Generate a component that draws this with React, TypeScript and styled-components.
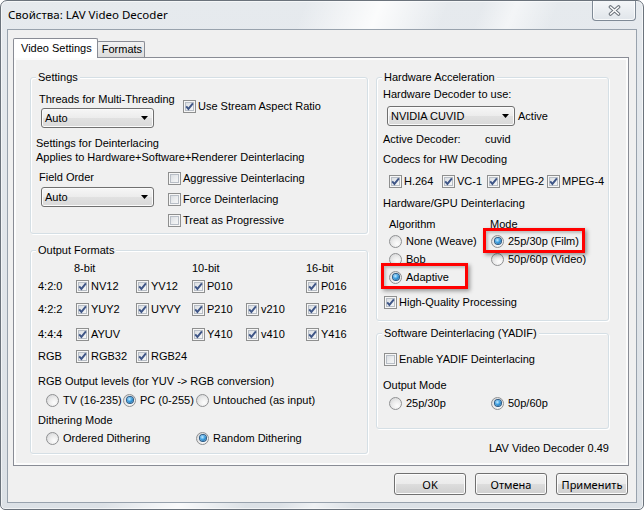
import React from "react";
import styled, { createGlobalStyle } from "styled-components";

const GlobalStyle = createGlobalStyle`
  html, body { margin: 0; padding: 0; }
  body {
    width: 644px; height: 510px; overflow: hidden; background: #ffffff;
    font-family: "Liberation Sans", Arial, sans-serif; font-size: 11px; color: #000;
  }
  *, *::before, *::after { box-sizing: border-box; }
`;

const Window = styled.div`
  width: 644px;
  height: 510px;
  border: 1px solid #6b737c;
  border-radius: 7px 7px 5px 5px;
  padding: 0 6px 6px 6px;
  display: flex;
  flex-direction: column;
  overflow: hidden;
  background:
    linear-gradient(112deg, rgba(255,255,255,0) 36%, rgba(255,255,255,0.85) 45%, rgba(255,255,255,0) 53%),
    linear-gradient(112deg, rgba(255,255,255,0) 57%, rgba(255,255,255,0.55) 61%, rgba(255,255,255,0) 66%),
    linear-gradient(180deg, #e6eaee 0%, #dce1e6 100%);
  box-shadow: inset 0 0 0 1px rgba(255,255,255,0.6);
`;

const TitleBar = styled.div`
  flex: none;
  height: 28px;
  display: flex;
  align-items: flex-start;
`;

const Title = styled.div`
  margin-top: 7px;
  padding-left: 1px;
  line-height: 14px;
  font-family: "Noto Sans", "Liberation Sans", sans-serif;
  font-size: 11.5px;
  color: #000;
  white-space: nowrap;
`;

const CloseButton = styled.div`
  margin-left: auto;
  margin-right: 1px;
  margin-top: -1px;
  width: 44px;
  height: 21px;
  border: 1px solid #7f8a96;
  border-top: none;
  border-radius: 0 0 4px 4px;
  background: linear-gradient(#f5f7f9, #e0e5ea);
  box-shadow: inset 0 0 0 1px rgba(255,255,255,0.75);
  display: flex;
  align-items: center;
  justify-content: center;
`;

const Client = styled.div`
  flex: 1;
  border: 1px solid #98a2ad;
  background: #f0f0f0;
  display: flex;
  flex-direction: column;
  padding: 8px 7px 0 5px;
`;

const TabStrip = styled.div`
  height: 19px;
  display: flex;
  align-items: flex-end;
`;

const Tab = styled.div<{ $active?: boolean }>`
  position: relative;
  z-index: ${(p) => (p.$active ? 1 : 0)};
  height: ${(p) => (p.$active ? 20 : 16)}px;
  margin-bottom: ${(p) => (p.$active ? -1 : 0)}px;
  margin-left: ${(p) => (p.$active ? 0 : -1)}px;
  padding: ${(p) => (p.$active ? "0 5px 0 7px" : "0 2px 0 4px")};
  border: 1px solid #898c95;
  border-bottom: none;
  border-radius: 2px 2px 0 0;
  background: ${(p) => (p.$active ? "#ffffff" : "linear-gradient(#f2f2f2, #dcdcdc)")};
  line-height: ${(p) => (p.$active ? 18 : 15)}px;
  white-space: nowrap;
`;

const TabPanel = styled.div`
  width: 616px;
  height: 409px;
  border: 1px solid #898c95;
  background: #fcfcfc;
  padding: 2px;
  display: flex;
`;

const Page = styled.div`
  flex: 1;
  background: #f0f0f0;
  display: flex;
  gap: 8px;
  padding: 17px 0 0 14px;
`;

const Column = styled.div<{ $w: number }>`
  width: ${(p) => p.$w}px;
  display: flex;
  flex-direction: column;
`;

const Group = styled.section<{ $h: number; $mt?: number }>`
  position: relative;
  height: ${(p) => p.$h}px;
  margin-top: ${(p) => p.$mt ?? 0}px;
  border: 1px solid #d5dfe5;
  border-radius: 3px;
  box-shadow: inset 1px 1px 0 #ffffff, 1px 1px 0 #ffffff;
  display: flex;
  flex-direction: column;
`;

const GroupTitle = styled.div`
  align-self: flex-start;
  margin: -8px 0 0 5px;
  padding: 0 2px;
  height: 14px;
  line-height: 14px;
  background: #f0f0f0;
  white-space: nowrap;
`;

const Text = styled.div<{ $mt?: number; $pl?: number; $right?: boolean }>`
  height: 14px;
  line-height: 14px;
  white-space: nowrap;
  margin-top: ${(p) => p.$mt ?? 0}px;
  padding-left: ${(p) => p.$pl ?? 0}px;
  text-align: ${(p) => (p.$right ? "right" : "left")};
`;

const Row = styled.div<{ $mt?: number; $pl?: number; $align?: string }>`
  display: flex;
  align-items: ${(p) => p.$align ?? "flex-start"};
  margin-top: ${(p) => p.$mt ?? 0}px;
  padding-left: ${(p) => p.$pl ?? 0}px;
`;

const Col = styled.div<{ $w?: number; $mt?: number; $gap?: number }>`
  display: flex;
  flex-direction: column;
  gap: ${(p) => p.$gap ?? 0}px;
  width: ${(p) => (p.$w ? `${p.$w}px` : "auto")};
  flex: none;
  margin-top: ${(p) => p.$mt ?? 0}px;
`;

const Cell = styled.div<{ $w: number; $pl?: number }>`
  width: ${(p) => p.$w}px;
  padding-left: ${(p) => p.$pl ?? 0}px;
  flex: none;
  white-space: nowrap;
  line-height: 14px;
`;

const GridRow = styled.div<{ $cols: string; $mt?: number; $pl?: number }>`
  display: grid;
  grid-template-columns: ${(p) => p.$cols};
  align-items: center;
  height: 14px;
  margin-top: ${(p) => p.$mt ?? 0}px;
  padding-left: ${(p) => p.$pl ?? 0}px;
  line-height: 14px;
  white-space: nowrap;
`;

const HeaderCell = styled.span<{ $col: number; $shift?: number }>`
  grid-column: ${(p) => p.$col};
  margin-left: ${(p) => p.$shift ?? 0}px;
`;

const ComboBox = styled.div<{ $w: number; $mt?: number; $ml?: number }>`
  width: ${(p) => p.$w}px;
  height: 20px;
  flex: none;
  margin-top: ${(p) => p.$mt ?? 0}px;
  margin-left: ${(p) => p.$ml ?? 0}px;
  border: 1px solid #707070;
  border-radius: 3px;
  background: linear-gradient(#f6f6f6 0%, #ececec 50%, #e1e1e1 51%, #d9d9d9 100%);
  box-shadow: inset 0 0 0 1px #fbfbfb;
  display: flex;
  align-items: center;
  justify-content: space-between;
  padding: 0 5px 0 3px;
  line-height: 14px;
  white-space: nowrap;
`;

const CheckItem = styled.div<{ $mt?: number; $ml?: number }>`
  display: flex;
  align-items: center;
  gap: 2px;
  height: 14px;
  margin-top: ${(p) => p.$mt ?? 0}px;
  margin-left: ${(p) => p.$ml ?? 0}px;
  white-space: nowrap;
  line-height: 14px;
`;

const CheckSquare = styled.span`
  flex: none;
  width: 13px;
  height: 13px;
  border: 1px solid #8e8f8f;
  background: linear-gradient(135deg, #d3d7dc 0%, #eceef0 55%, #fbfbfb 100%);
  box-shadow: inset 0 0 0 1px #f6f6f6, inset 0 0 0 2px #b8bec6;
  display: flex;
  align-items: center;
  justify-content: center;
`;

const RadioItem = styled.div`
  display: flex;
  align-items: center;
  gap: 4px;
  height: 14px;
  white-space: nowrap;
  line-height: 14px;
`;

const RadioCircle = styled.span<{ $on?: boolean }>`
  position: relative;
  flex: none;
  width: 13px;
  height: 13px;
  border-radius: 50%;
  border: 1px solid #8f9092;
  background: radial-gradient(circle at 65% 70%, #fdfdfd 0%, #ececec 45%, #cfd0d2 100%);
  &::after {
    content: "";
    display: ${(p) => (p.$on ? "block" : "none")};
    position: absolute;
    left: 2.5px;
    top: 2.5px;
    width: 6px;
    height: 6px;
    border-radius: 50%;
    background: radial-gradient(circle at 40% 35%, #c7ecff 0%, #3fa2e4 45%, #0d4f86 100%);
    box-shadow: 0 0 0 1px #2a5a86;
  }
`;

const Highlight = styled.div<{ $l: number; $t: number; $w: number; $h: number }>`
  position: absolute;
  left: ${(p) => p.$l}px;
  top: ${(p) => p.$t}px;
  width: ${(p) => p.$w}px;
  height: ${(p) => p.$h}px;
  border: 3px solid #ff0000;
  box-shadow: 2px 2px 4px rgba(0, 0, 0, 0.38), inset 2px 2px 3px rgba(0, 0, 0, 0.22);
  pointer-events: none;
`;

const ButtonRow = styled.div`
  display: flex;
  justify-content: flex-end;
  gap: 9px;
  margin-top: 7px;
  padding-right: 1px;
`;

const Button = styled.div`
  width: 72px;
  height: 22px;
  border: 1px solid #707070;
  border-radius: 3px;
  background: linear-gradient(#f2f2f2 0%, #ebebeb 50%, #dddddd 51%, #cfcfcf 100%);
  box-shadow: inset 0 0 0 1px #fcfcfc;
  display: flex;
  align-items: center;
  justify-content: center;
  font-family: "Noto Sans", "Liberation Sans", sans-serif;
  font-size: 11px;
  color: #000;
`;

const Arrow = () => (
  <svg width="7" height="4" viewBox="0 0 7 4">
    <polygon points="0,0 7,0 3.5,4" fill="#000" />
  </svg>
);

const CloseGlyph = () => (
  <svg width="13" height="11" viewBox="0 0 13 11">
    <path d="M2.5 2 L10.5 9 M10.5 2 L2.5 9" stroke="#6c737b" strokeWidth="3.6" strokeLinecap="round" fill="none" />
    <path d="M2.5 2 L10.5 9 M10.5 2 L2.5 9" stroke="#ffffff" strokeWidth="1.6" strokeLinecap="round" fill="none" />
  </svg>
);

const CheckBox = ({ checked, label, mt, ml }: { checked?: boolean; label: string; mt?: number; ml?: number }) => (
  <CheckItem $mt={mt} $ml={ml}>
    <CheckSquare>
      {checked && (
        <svg width="11" height="11" viewBox="0 0 11 11">
          <path d="M2.2 5.4 L4.4 7.9 L8.9 2.3" fill="none" stroke="#3f5687" strokeWidth="1.9" />
        </svg>
      )}
    </CheckSquare>
    <span>{label}</span>
  </CheckItem>
);

const Radio = ({ on, label }: { on?: boolean; label: string }) => (
  <RadioItem>
    <RadioCircle $on={on} />
    <span>{label}</span>
  </RadioItem>
);

const FMT_COLS = "38px 60px 56px 54px 60px 1fr";

export default function App() {
  return (
    <>
      <GlobalStyle />
      <Window>
        <TitleBar>
          <Title>Свойства: LAV Video Decoder</Title>
          <CloseButton>
            <CloseGlyph />
          </CloseButton>
        </TitleBar>
        <Client>
          <TabStrip>
            <Tab $active>Video Settings</Tab>
            <Tab>Formats</Tab>
          </TabStrip>
          <TabPanel>
            <Page>
              <Column $w={338}>
                <Group $h={157}>
                  <GroupTitle>Settings</GroupTitle>
                  <Row $mt={8} $pl={8}>
                    <Col $w={144}>
                      <Text>Threads for Multi-Threading</Text>
                      <ComboBox $w={113} $mt={2} $ml={2}>
                        <span>Auto</span>
                        <Arrow />
                      </ComboBox>
                    </Col>
                    <CheckBox checked label="Use Stream Aspect Ratio" mt={7} />
                  </Row>
                  <Text $mt={8} $pl={5}>Settings for Deinterlacing</Text>
                  <Text $pl={5}>Applies to Hardware+Software+Renderer Deinterlacing</Text>
                  <Row $mt={6} $pl={8}>
                    <Col $w={129}>
                      <Text>Field Order</Text>
                      <ComboBox $w={113} $mt={3} $ml={2}>
                        <span>Auto</span>
                        <Arrow />
                      </ComboBox>
                    </Col>
                    <Col $mt={1} $gap={7}>
                      <CheckBox label="Aggressive Deinterlacing" />
                      <CheckBox label="Force Deinterlacing" />
                      <CheckBox label="Treat as Progressive" />
                    </Col>
                  </Row>
                </Group>

                <Group $h={204} $mt={16}>
                  <GroupTitle>Output Formats</GroupTitle>
                  <GridRow $cols={FMT_COLS} $mt={4} $pl={7}>
                    <HeaderCell $col={2} $shift={-2}>8-bit</HeaderCell>
                    <HeaderCell $col={4}>10-bit</HeaderCell>
                    <HeaderCell $col={6}>16-bit</HeaderCell>
                  </GridRow>
                  <GridRow $cols={FMT_COLS} $mt={4} $pl={7}>
                    <span>4:2:0</span>
                    <CheckBox checked label="NV12" />
                    <CheckBox checked label="YV12" />
                    <CheckBox checked label="P010" />
                    <span />
                    <CheckBox checked label="P016" />
                  </GridRow>
                  <GridRow $cols={FMT_COLS} $mt={9} $pl={7}>
                    <span>4:2:2</span>
                    <CheckBox checked label="YUY2" />
                    <CheckBox checked label="UYVY" />
                    <CheckBox checked label="P210" />
                    <CheckBox checked label="v210" />
                    <CheckBox checked label="P216" />
                  </GridRow>
                  <GridRow $cols={FMT_COLS} $mt={11} $pl={7}>
                    <span>4:4:4</span>
                    <CheckBox checked label="AYUV" />
                    <span />
                    <CheckBox checked label="Y410" />
                    <CheckBox checked label="v410" />
                    <CheckBox checked label="Y416" />
                  </GridRow>
                  <GridRow $cols={FMT_COLS} $mt={8} $pl={7}>
                    <span>RGB</span>
                    <CheckBox checked label="RGB32" />
                    <CheckBox checked label="RGB24" />
                  </GridRow>
                  <Text $mt={11} $pl={7}>RGB Output levels (for YUV -&gt; RGB conversion)</Text>
                  <GridRow $cols="77px 73px 1fr" $mt={5} $pl={15}>
                    <Radio label="TV (16-235)" />
                    <Radio on label="PC (0-255)" />
                    <Radio label="Untouched (as input)" />
                  </GridRow>
                  <Text $mt={6} $pl={7}>Dithering Mode</Text>
                  <GridRow $cols="150px 1fr" $mt={4} $pl={15}>
                    <Radio label="Ordered Dithering" />
                    <Radio on label="Random Dithering" />
                  </GridRow>
                </Group>
              </Column>

              <Column $w={233}>
                <Group $h={244}>
                  <GroupTitle>Hardware Acceleration</GroupTitle>
                  <Text $mt={3} $pl={6}>Hardware Decoder to use:</Text>
                  <Row $mt={5} $pl={10} $align="center">
                    <ComboBox $w={128}>
                      <span>NVIDIA CUVID</span>
                      <Arrow />
                    </ComboBox>
                    <Cell $w={50} $pl={3}>Active</Cell>
                  </Row>
                  <Row $mt={6} $pl={6}>
                    <Cell $w={102}>Active Decoder:</Cell>
                    <Cell $w={60}>cuvid</Cell>
                  </Row>
                  <Text $mt={6} $pl={6}>Codecs for HW Decoding</Text>
                  <GridRow $cols="53px 45px 60px 1fr" $mt={8} $pl={12}>
                    <CheckBox checked label="H.264" />
                    <CheckBox checked label="VC-1" />
                    <CheckBox checked label="MPEG-2" />
                    <CheckBox checked label="MPEG-4" />
                  </GridRow>
                  <Text $mt={8} $pl={6}>Hardware/GPU Deinterlacing</Text>
                  <GridRow $cols="101px 1fr" $mt={7} $pl={12}>
                    <span>Algorithm</span>
                    <span>Mode</span>
                  </GridRow>
                  <GridRow $cols="102px 1fr" $mt={3} $pl={12}>
                    <Radio label="None (Weave)" />
                    <Radio on label="25p/30p (Film)" />
                  </GridRow>
                  <GridRow $cols="102px 1fr" $mt={4} $pl={12}>
                    <Radio label="Bob" />
                    <Radio label="50p/60p (Video)" />
                  </GridRow>
                  <GridRow $cols="102px 1fr" $mt={4} $pl={12}>
                    <Radio on label="Adaptive" />
                  </GridRow>
                  <CheckBox checked label="High-Quality Processing" mt={11} ml={7} />
                  <Highlight $l={106} $t={150} $w={102} $h={25} />
                  <Highlight $l={4} $t={185} $w={87} $h={26} />
                </Group>

                <Group $h={96} $mt={12}>
                  <GroupTitle>Software Deinterlacing (YADIF)</GroupTitle>
                  <CheckBox label="Enable YADIF Deinterlacing" mt={12} ml={7} />
                  <Text $mt={12} $pl={6}>Output Mode</Text>
                  <GridRow $cols="102px 1fr" $mt={4} $pl={12}>
                    <Radio label="25p/30p" />
                    <Radio on label="50p/60p" />
                  </GridRow>
                </Group>

                <Text $mt={12} $right>LAV Video Decoder 0.49</Text>
              </Column>
            </Page>
          </TabPanel>
          <ButtonRow>
            <Button>OK</Button>
            <Button>Отмена</Button>
            <Button>Применить</Button>
          </ButtonRow>
        </Client>
      </Window>
    </>
  );
}
